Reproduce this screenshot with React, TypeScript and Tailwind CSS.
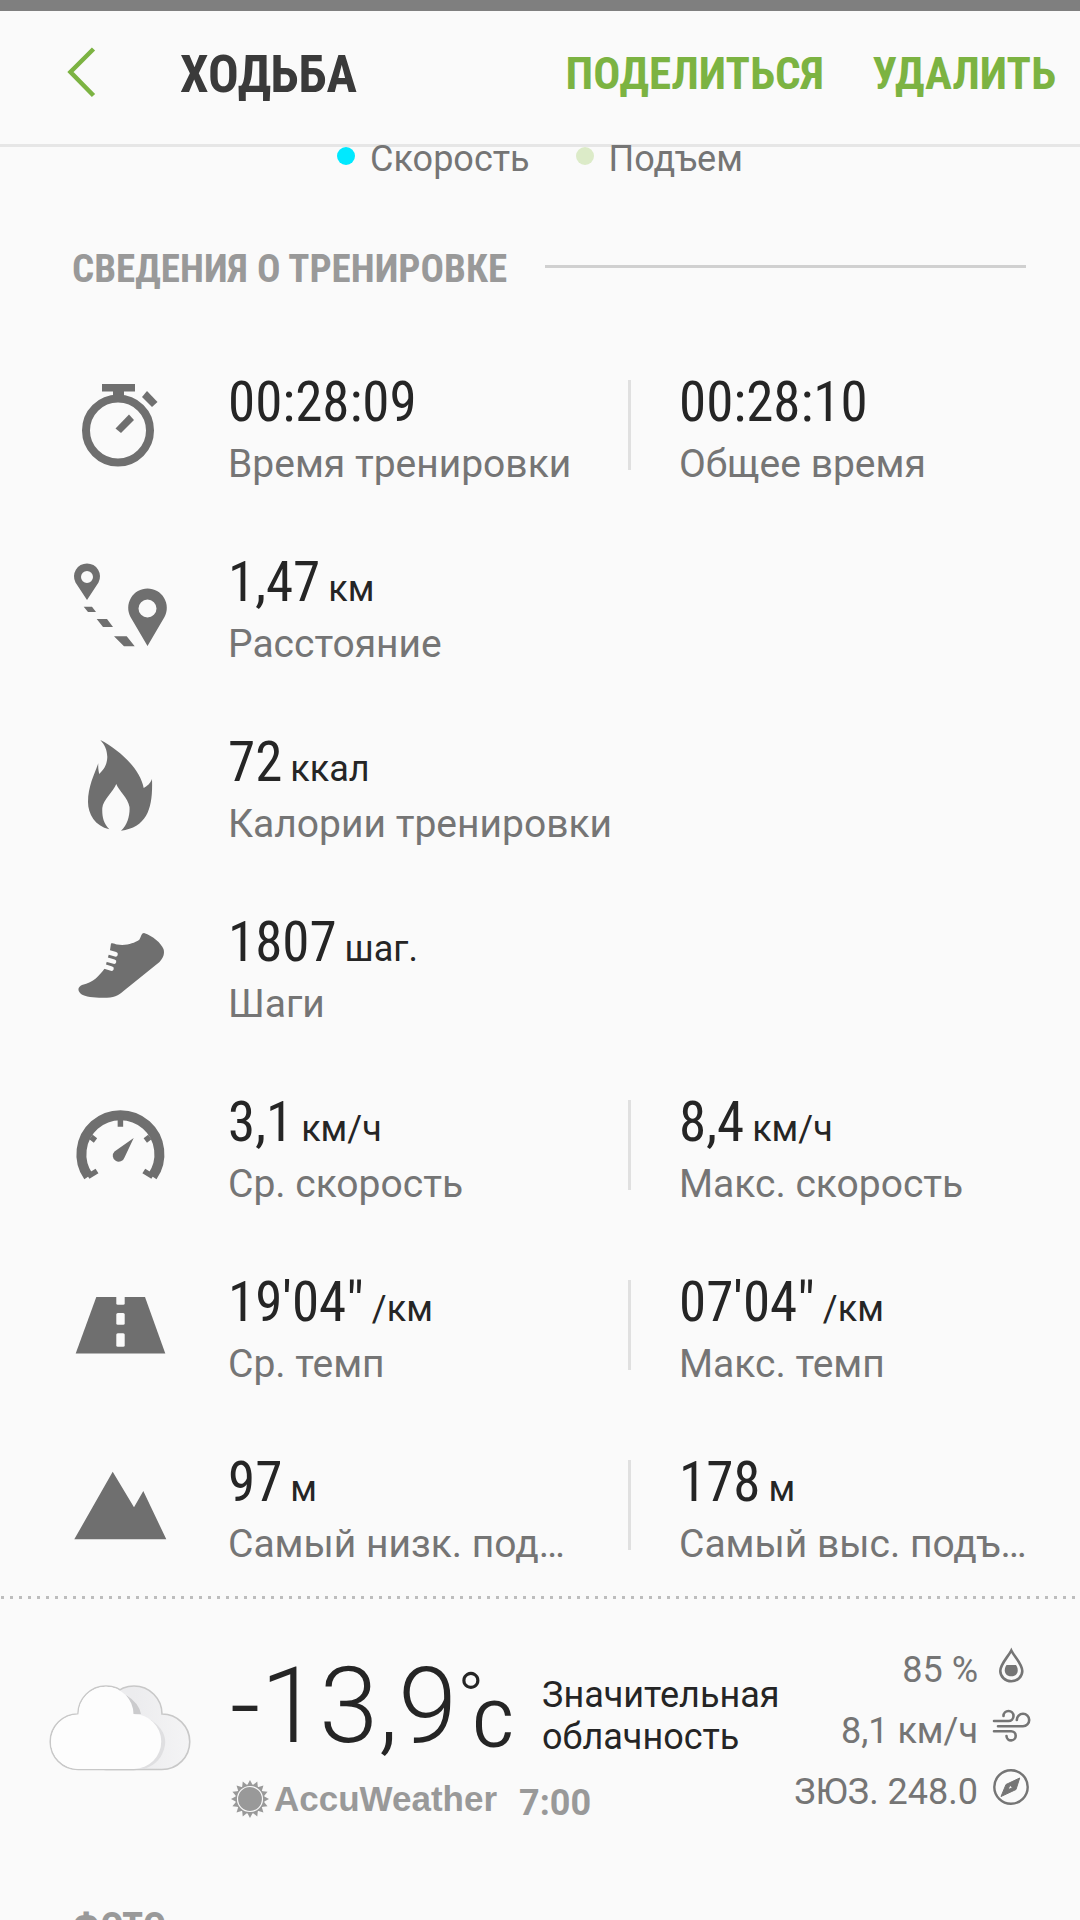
import React from 'react';

interface Metric {
  value: string;
  unit?: string;
  label: string;
}

interface MetricRow {
  icon: React.ReactNode;
  items: Metric[];
}

const StopwatchIcon = () => (
  <svg viewBox="0 0 120 120" className="h-[120px] w-[120px] fill-[#6f6f6f]" aria-hidden="true">
    <path d="M42 24H75V31.500H64V40H53V31.500H42Z" />
    <circle cx="58" cy="70.500" r="32" fill="none" stroke="#6f6f6f" strokeWidth="8" />
    <path d="M87 31L97.500 42L92 47L82 37Z" />
    <path d="M69 54.500L74 60L61 73L55.500 68.500Z" />
  </svg>
);

const RouteIcon = () => (
  <svg viewBox="0 0 120 120" className="h-[120px] w-[120px] fill-[#6f6f6f]" fillRule="evenodd" aria-hidden="true">
    <path d="M27 60L15.500 42.500A13 13 0 1 1 38.500 42.500ZM27 31A6 6 0 1 0 27 43A6 6 0 1 0 27 31Z" />
    <path d="M87.500 106L70.500 77A19.300 19.300 0 1 1 104.500 77ZM87.500 59.500A9 9 0 1 0 87.500 77.500A9 9 0 1 0 87.500 59.500Z" />
    <path d="M23.700 66.800H32L36 72H28ZM36.700 79H47L53 87H43ZM54 96.300H66.700L74.700 106.300H64Z" />
  </svg>
);

const FlameIcon = () => (
  <svg viewBox="0 0 120 120" className="h-[120px] w-[120px] fill-[#6f6f6f]" aria-hidden="true">
    <path d="M40.300 20C58 29 80 48 83.700 68C87 66 90 64 92 59C93 87 88 107 61 110.700C68 105 70 94 69.500 87C68 78 59 71 56.300 64C53 72 43 80 42.300 88C42 96 43 103 49.300 109.300C35 106 28 94 28 82C28 67 34 55 38.300 43.300C38 48 38.500 51 39.300 54C43 50 47 46 47.300 37C47 30 45 25 40.300 20Z" />
  </svg>
);

const ShoeIcon = () => (
  <svg viewBox="0 0 120 120" className="h-[120px] w-[120px] fill-[#6f6f6f]" aria-hidden="true">
    <path d="M84 33C93 36 101 43 103.500 49C105 54 103 58 99.500 62L66 89C60 94 56 97.700 47 97.700C37 98 26 97.500 21 94C17 90 18 87 22 85C34 82 39 76 45 68L50 50L51 43.500C53 42.500 55 44 57 44.500C67 46 74 43 79 40C81 38 81 33 84 33Z" />
    <path d="M46 51.500L55.500 54.300M43 58.500L54 61.600M40 65L51.500 68.600" fill="none" stroke="#fafafa" strokeWidth="4.600" strokeLinecap="round" />
  </svg>
);

const GaugeIcon = () => (
  <svg viewBox="0 0 120 120" className="h-[120px] w-[120px] fill-none stroke-[#6f6f6f]" aria-hidden="true">
    <path d="M28.400 96.500A39 39 0 1 1 92.400 96.500" strokeWidth="10" />
    <path d="M60.400 36V46.700M31 57L35.500 60.500M89.800 57L85.300 60.500M28 96.500L37 91M92.800 96.500L83.800 91" strokeWidth="5.500" />
    <path d="M73.700 58L64.500 77.500A6 6 0 1 1 54.500 71.500Z" className="fill-[#6f6f6f]" stroke="none" />
  </svg>
);

const RoadIcon = () => (
  <svg viewBox="0 0 120 120" className="h-[120px] w-[120px] fill-[#6f6f6f]" aria-hidden="true">
    <path d="M36.300 37H85L105.300 93.500H15.700Z" />
    <g className="fill-[#fafafa]">
      <rect x="56.300" y="34" width="8.400" height="10.700" rx="1.500" />
      <rect x="56.300" y="53" width="8.400" height="11.700" rx="1.500" />
      <rect x="56.300" y="73.300" width="8.400" height="13.400" rx="1.500" />
    </g>
  </svg>
);

const MountainIcon = () => (
  <svg viewBox="0 0 120 120" className="h-[120px] w-[120px] fill-[#6f6f6f]" aria-hidden="true">
    <path d="M52.700 31.700L74 67.300L83.300 51L106.300 99.300H14.300Z" />
  </svg>
);

const CloudIcon = () => (
  <svg viewBox="0 0 160 105" className="h-[105px] w-[160px] shrink-0" aria-hidden="true">
    <defs>
      <linearGradient id="cloudBack" x1="0" y1="0" x2="1" y2="0">
        <stop offset="0.500" stopColor="#ececee" />
        <stop offset="1" stopColor="#f4f4f5" />
      </linearGradient>
    </defs>
    <path d="M38 94.500A27.750 27.750 0 0 1 38 39A28 28 0 0 1 94 39A27.750 27.750 0 0 1 94 94.500Z" fill="#fff" stroke="#c8c8c8" strokeWidth="1.600" />
    <path d="M66 94.500A27.750 27.750 0 0 1 66 39A28 28 0 0 1 122 39A27.750 27.750 0 0 1 122 94.500Z" fill="url(#cloudBack)" stroke="#c8c8c8" strokeWidth="1.600" />
    <path d="M86 20Q99 28 101 39L93 40Q92 28 86 20Z" fill="#cbcbcd" />
    <path d="M111 45Q127 56 125 70Q122 88 104 94L98 92Z" fill="#dfdfe1" />
    <path d="M38 94A27.250 27.250 0 0 1 38.500 39.500A27.500 27.500 0 0 1 93.500 39A27.500 27.500 0 0 1 94 94Z" fill="#fdfdfd" />
  </svg>
);

const SunLogo = () => (
  <svg viewBox="0 0 40 40" className="h-10 w-10" aria-hidden="true">
    <g className="fill-[#999]">
      {Array.from({ length: 16 }, (_, i) => (
        <path key={i} d="M20 1L23.200 7H16.800Z" transform={`rotate(${i * 22.5} 20 20)`} />
      ))}
      <circle cx="20" cy="20" r="14.500" />
    </g>
    <circle cx="20" cy="20" r="12.500" fill="none" stroke="#fafafa" strokeWidth="1.200" />
  </svg>
);

const DropIcon = () => (
  <svg viewBox="0 0 42 42" className="mb-2.5 h-[42px] w-[42px]" aria-hidden="true">
    <path d="M21.300 6.500C18 13 10.300 20 10.300 27A11 10.200 0 0 0 32.300 27C32.300 20 24.500 13 21.300 6.500Z" fill="none" stroke="#757575" strokeWidth="2.600" />
    <path d="M16.500 21H26C29 25 28.500 32.300 21.300 32.300C14 32.300 13.500 25 16.500 21Z" fill="#757575" />
  </svg>
);

const WindIcon = () => (
  <svg viewBox="0 0 42 42" className="mb-2.5 h-[42px] w-[42px] fill-none stroke-[#757575]" strokeWidth="2.600" strokeLinecap="round" aria-hidden="true">
    <path d="M4 16H18.500A5 5 0 1 0 13.500 11" />
    <path d="M8 21.200H33A6.200 6.200 0 1 0 26.800 15" />
    <path d="M4 26.200H21A4.600 4.600 0 1 1 16.500 31" />
  </svg>
);

const CompassIcon = () => (
  <svg viewBox="0 0 42 42" className="mb-2.5 h-[42px] w-[42px]" aria-hidden="true">
    <circle cx="21" cy="21" r="16.700" fill="none" stroke="#757575" strokeWidth="2.400" />
    <path d="M29.700 12L26 23.500L11 30.500L16 18.500ZM20 19L18 23.500L22.500 22Z" fill="#757575" stroke="#757575" strokeLinejoin="round" fillRule="evenodd" />
  </svg>
);

const rows: MetricRow[] = [
  {
    icon: <StopwatchIcon />,
    items: [
      { value: '00:28:09', label: 'Время тренировки' },
      { value: '00:28:10', label: 'Общее время' },
    ],
  },
  { icon: <RouteIcon />, items: [{ value: '1,47', unit: 'км', label: 'Расстояние' }] },
  { icon: <FlameIcon />, items: [{ value: '72', unit: 'ккал', label: 'Калории тренировки' }] },
  { icon: <ShoeIcon />, items: [{ value: '1807', unit: 'шаг.', label: 'Шаги' }] },
  {
    icon: <GaugeIcon />,
    items: [
      { value: '3,1', unit: 'км/ч', label: 'Ср. скорость' },
      { value: '8,4', unit: 'км/ч', label: 'Макс. скорость' },
    ],
  },
  {
    icon: <RoadIcon />,
    items: [
      { value: '19\'04"', unit: '/км', label: 'Ср. темп' },
      { value: '07\'04"', unit: '/км', label: 'Макс. темп' },
    ],
  },
  {
    icon: <MountainIcon />,
    items: [
      { value: '97', unit: 'м', label: 'Самый низк. под…' },
      { value: '178', unit: 'м', label: 'Самый выс. подъ…' },
    ],
  },
];

const conditions = [
  { text: '85 %', icon: <DropIcon /> },
  { text: '8,1 км/ч', icon: <WindIcon /> },
  { text: 'ЗЮЗ. 248.0', icon: <CompassIcon /> },
];

const SectionHeading = ({ title }: { title: string }) => (
  <div className="flex items-center gap-[38px] pr-[54px] pl-[72px]">
    <h2 className="font-['Roboto_Condensed',sans-serif] text-[39px] leading-[48px] font-bold text-[#999]">{title}</h2>
    <div className="mb-1.5 h-[3px] flex-1 bg-[#d0d0d0]" />
  </div>
);

const MetricCell = ({ metric }: { metric: Metric }) => (
  <div className="whitespace-nowrap pt-3">
    <div className="flex items-baseline gap-2 text-[#252525]">
      <span className="font-['Roboto_Condensed',sans-serif] text-[55px] leading-[60px]">{metric.value}</span>
      {metric.unit && <span className="text-[36px] leading-none">{metric.unit}</span>}
    </div>
    <div className="mt-2 text-[39px] leading-[48px] text-[#757575]">{metric.label}</div>
  </div>
);

export default function App() {
  return (
    <div className="h-screen overflow-hidden bg-[#fafafa] font-['Roboto',sans-serif]">
      <div className="h-[11px] bg-[#7f7f7f]" />

      <header className="flex h-[136px] items-center border-b-[3px] border-[#e6e6e6] pr-6 pb-2 pl-16">
        <button aria-label="Назад" className="h-[54px] w-9">
          <svg viewBox="0 0 36 54" className="h-[54px] w-9 fill-none stroke-[#7cb342]" strokeWidth="4.500">
            <path d="M29.500 2L6.500 25L29.500 48.500" />
          </svg>
        </button>
        <h1 className="ml-20 flex-1 pt-0.5 font-['Roboto_Condensed',sans-serif] text-[51px] leading-[60px] font-bold text-[#3a3a3a]">ХОДЬБА</h1>
        <div className="flex gap-12 font-['Roboto_Condensed',sans-serif] text-[45px] leading-[60px] font-bold text-[#7cb342]">
          <button>ПОДЕЛИТЬСЯ</button>
          <button>УДАЛИТЬ</button>
        </div>
      </header>

      {/* Chart legend */}
      <div className="-mt-[9px] flex justify-center gap-[46px] text-[36px] leading-[42px] text-[#757575]">
        <div className="flex items-center gap-[15px]">
          <span className="mb-1.5 h-[18px] w-[18px] rounded-full bg-[#00e9ff]" />
          Скорость
        </div>
        <div className="flex items-center gap-[15px]">
          <span className="mb-1.5 h-[18px] w-[18px] rounded-full bg-[#dcebc8]" />
          Подъем
        </div>
      </div>

      <section className="mt-[65px]">
        <SectionHeading title="СВЕДЕНИЯ О ТРЕНИРОВКЕ" />
        <ul className="mt-[67px] flex flex-col gap-[52px] pr-[52px] pl-[60px]">
          {rows.map((row) => (
            <li key={row.items[0].label} className="flex h-32 gap-12">
              <div className="shrink-0">{row.icon}</div>
              <div className="grid flex-1 grid-cols-2">
                <MetricCell metric={row.items[0]} />
                {row.items[1] && (
                  <div className="flex gap-12">
                    <div className="mt-5 h-[90px] w-[3px] bg-[#e0e0e0]" />
                    <MetricCell metric={row.items[1]} />
                  </div>
                )}
              </div>
            </li>
          ))}
        </ul>
      </section>

      <div className="mt-[25px] h-[9px] bg-[radial-gradient(circle,#bdbdbd_1.500px,transparent_2px)] bg-[length:9px_9px] bg-[position:-2px_0px]" />

      {/* Weather */}
      <section className="flex items-start pr-12 pl-10">
        <div className="mt-[73px]">
          <CloudIcon />
        </div>
        <div className="mt-[50px] ml-[30px]">
          <div className="flex h-[108px] items-start whitespace-nowrap text-[#252525]">
            <span className="text-[106px] leading-[108px] font-light">-13,9</span>
            <span className="mt-4 text-[72px] leading-[64px] font-light">°</span>
            <span className="-ml-3 mt-[42px] text-[64px] leading-[64px]">C</span>
            <p className="mt-[22px] ml-7 text-[36px] leading-[42px]">
              Значительная
              <br />
              облачность
            </p>
          </div>
          <div className="mt-[15px] flex items-center text-[#999]">
            <SunLogo />
            <span className="ml-1 font-['Liberation_Sans',sans-serif] text-[35px] leading-10 font-bold">AccuWeather</span>
            <span className="ml-[22px] pt-2 text-[36px] leading-10 font-bold">7:00</span>
          </div>
        </div>
        <ul className="mt-[37px] ml-auto text-[36px] text-[#757575]">
          {conditions.map((item) => (
            <li key={item.text} className="flex h-[61px] items-center justify-end gap-3 whitespace-nowrap">
              {item.text}
              {item.icon}
            </li>
          ))}
        </ul>
      </section>

      <section className="mt-20">
        <SectionHeading title="ФОТО" />
      </section>
    </div>
  );
}
